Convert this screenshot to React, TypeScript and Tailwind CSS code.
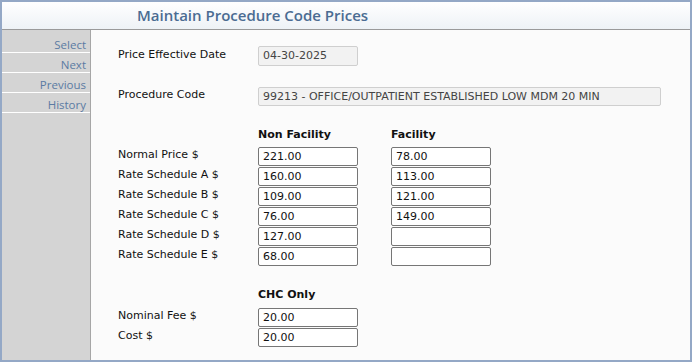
import React from "react";

const body = { fontFamily: '"DejaVu Sans", Verdana, sans-serif' };
const ui = { fontFamily: '"Open Sans", "Noto Sans", sans-serif' };

function Field({ value }: { value: string }) {
  return (
    <div className="h-[19px] w-[100px] rounded-[2px] border border-[#767676] bg-white pl-[4px] text-[11px] leading-[17px] text-[#111]">
      {value}
    </div>
  );
}

const rows: [string, string, string][] = [
  ["Normal Price $", "221.00", "78.00"],
  ["Rate Schedule A $", "160.00", "113.00"],
  ["Rate Schedule B $", "109.00", "121.00"],
  ["Rate Schedule C $", "76.00", "149.00"],
  ["Rate Schedule D $", "127.00", ""],
  ["Rate Schedule E $", "68.00", ""],
];

export default function App() {
  return (
    <div className="flex h-[362px] w-[692px] flex-col border-2 border-[#94a8c6] bg-[#fbfbfb]">
      <div className="flex h-[28px] shrink-0 items-center border-b border-[#9a9a9a] bg-gradient-to-b from-[#ffffff] to-[#eef2f6] pl-[135px]">
        <span style={ui} className="text-[15px] font-semibold text-[#4b6c92]">
          Maintain Procedure Code Prices
        </span>
      </div>
      <div className="flex flex-1">
        <div className="w-[89px] shrink-0 border-r border-[#a6a6a6] bg-[#d4d4d4] pt-[3px]">
          {["Select", "Next", "Previous", "History"].map((t) => (
            <div
              key={t}
              style={ui}
              className="h-[20px] border-b border-white pr-[4px] pt-[4px] text-right text-[11.5px] leading-[15px] text-[#5b7ba3]"
            >
              {t}
            </div>
          ))}
        </div>
        <div style={body} className="flex-1 pl-[27px] pt-[16px] text-[11px] text-[#111]">
          <div className="flex items-start">
            <div className="w-[140px] pt-[1px] leading-[15px]">Price Effective Date</div>
            <div className="h-[20px] w-[100px] rounded-[2px] border border-[#cfcfcf] bg-[#f2f2f2] pl-[4px] leading-[18px] text-[#444]">
              04-30-2025
            </div>
          </div>
          <div className="mt-[21px] flex items-start">
            <div className="w-[140px] pt-[0px] leading-[15px]">Procedure Code</div>
            <div className="h-[19px] w-[403px] rounded-[2px] border border-[#cfcfcf] bg-[#f2f2f2] pl-[4px] leading-[17px] text-[#444]">
              99213 - OFFICE/OUTPATIENT ESTABLISHED LOW MDM 20 MIN
            </div>
          </div>
          <div className="mt-[21px] flex font-bold leading-[15px]">
            <div className="w-[140px]" />
            <div className="w-[133px]">Non Facility</div>
            <div>Facility</div>
          </div>
          <div className="mt-[5px] flex flex-col gap-[1px]">
            {rows.map(([l, a, b]) => (
              <div key={l} className="flex items-start">
                <div className="w-[140px] leading-[15px]">{l}</div>
                <Field value={a} />
                <div className="w-[33px]" />
                <Field value={b} />
              </div>
            ))}
          </div>
          <div className="mt-[21px] flex font-bold leading-[15px]">
            <div className="w-[140px]" />
            <div>CHC Only</div>
          </div>
          <div className="mt-[6px] flex flex-col gap-[1px]">
            {[
              ["Nominal Fee $", "20.00"],
              ["Cost $", "20.00"],
            ].map(([l, v]) => (
              <div key={l} className="flex items-start">
                <div className="w-[140px] leading-[15px]">{l}</div>
                <Field value={v} />
              </div>
            ))}
          </div>
        </div>
      </div>
    </div>
  );
}
